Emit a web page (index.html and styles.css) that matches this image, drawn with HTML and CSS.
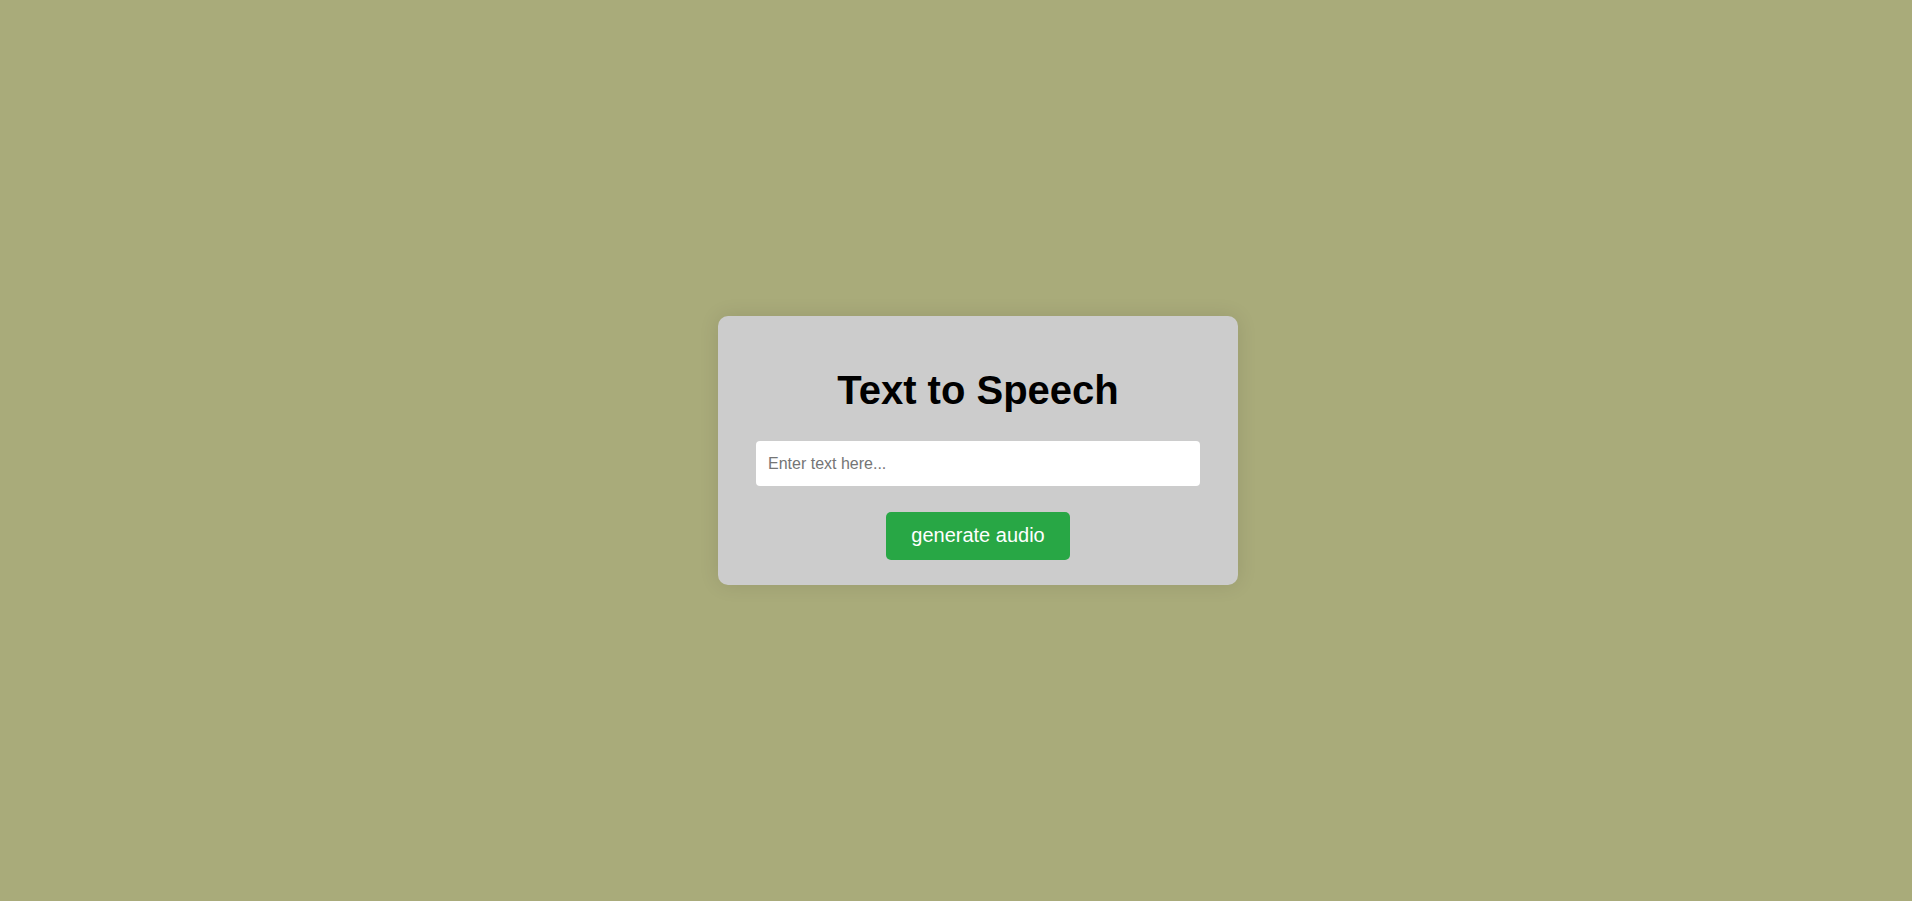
FILE: index.html
```html
<!DOCTYPE html>
<html lang="en">
<head>
<meta charset="utf-8">
<title>Text to Speech</title>
<link rel="stylesheet" href="styles.css">
</head>
<body>
<main class="card">
<h1 class="title">Text to Speech</h1>
<form class="form">
<input class="text" type="text" placeholder="Enter text here..." aria-label="Text">
<button class="generate" type="button">generate audio</button>
</form>
</main>
</body>
</html>
```
FILE: styles.css
```css
body {
  margin: 0;
  min-height: 100vh;
  padding-left: 44px;
  box-sizing: border-box;
  display: flex;
  align-items: center;
  justify-content: center;
  background: #a9ab7a;
  font-family: Arial, "Liberation Sans", sans-serif;
}
.card {
  box-sizing: border-box;
  width: 100%;
  max-width: 520px;
  padding: 25px 38px;
  border-radius: 10px;
  background: #ccc;
  box-shadow: 0 0 20px rgba(0, 0, 0, 0.1);
}
.title {
  margin: 26px 0 28px;
  font-size: 40px;
  line-height: 46px;
  text-align: center;
}
.form {
  display: flex;
  flex-direction: column;
  align-items: center;
  gap: 26px;
}
.text {
  box-sizing: border-box;
  width: 100%;
  height: 45px;
  padding: 12px;
  border: 0;
  border-radius: 4px;
  background: #fff;
  font: 16px Arial, "Liberation Sans", sans-serif;
}
.generate {
  padding: 11px 25px 13px;
  border: 0;
  border-radius: 5px;
  background: #28a745;
  color: #fff;
  font: 20px/24px Arial, "Liberation Sans", sans-serif;
  cursor: pointer;
}
```
